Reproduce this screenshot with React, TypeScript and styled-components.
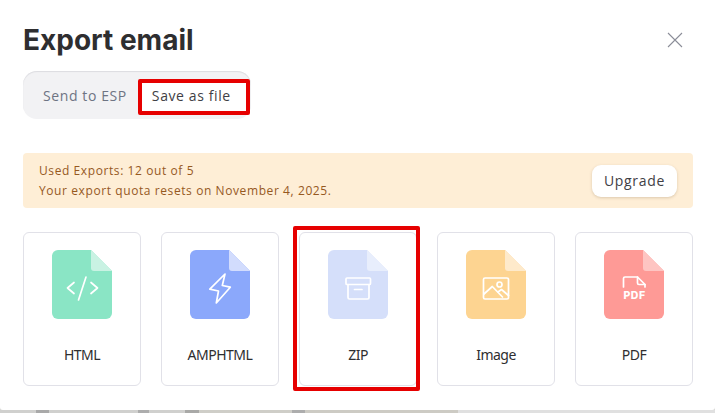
import styled, { createGlobalStyle } from "styled-components";

const GlobalStyle = createGlobalStyle`
  html, body {
    margin: 0;
    padding: 0;
    background: #fff;
  }
  * {
    box-sizing: border-box;
  }
`;

const formats = [
  { name: "HTML", body: "#8ae5c5", fold: "#c9f2e3" },
  { name: "AMPHTML", body: "#8ba8fb", fold: "#d2dcfd" },
  { name: "ZIP", body: "#d5dffa", fold: "#e8eefc" },
  { name: "Image", body: "#fdd491", fold: "#feeacb" },
  { name: "PDF", body: "#fe9a96", fold: "#fec5c2" },
];

// what shows of the page behind the dialog, left to right
const backdrop = [
  { w: 36, c: "#d0d0ce" },
  { w: 13, c: "#a9a9a9" },
  { w: 89, c: "#d0d0ce" },
  { w: 11, c: "#adadad" },
  { w: 36, c: "#d0d0ce" },
  { w: 14, c: "#a9a9a7" },
  { w: 93, c: "#cfcec8" },
  { w: 13, c: "#adadad" },
  { w: 153, c: "#cdcbc4" },
  { w: 257, c: "#e0e0e0" },
];

const Glyph = ({ name }: { name: string }) => {
  if (name === "HTML") {
    return (
      <GlyphLines>
        <path d="M22 32.5 15.5 38 22 43.5" />
        <path d="M39 32.5 45.5 38 39 43.5" />
        <path d="M34 27 26.5 50" />
      </GlyphLines>
    );
  }
  if (name === "AMPHTML") {
    return (
      <GlyphLines>
        <path d="M35 24 19.8 39.2 28.5 41 26.3 53 40.3 37.2 32.3 35.5Z" />
      </GlyphLines>
    );
  }
  if (name === "ZIP") {
    return (
      <GlyphLines>
        <rect x="18" y="28" width="24.5" height="6.5" rx="1" />
        <path d="M20 34.5V47.500a1.500 1.500 0 0 0 1.500 1.500H39.500a1.500 1.500 0 0 0 1.500-1.500V34.500" />
        <path d="M26.500 39.500H34" />
      </GlyphLines>
    );
  }
  if (name === "Image") {
    return (
      <GlyphLines>
        <rect x="17.500" y="28" width="25" height="21" rx="1.500" />
        <circle cx="33.500" cy="34.500" r="2.500" />
        <path d="M18 44 26.300 36.500 36.500 47" />
        <path d="M32 42 35.500 39.500 42.500 45.500" />
      </GlyphLines>
    );
  }
  return (
    <>
      <GlyphLines>
        <path d="M19.500 37V28.500a1.500 1.500 0 0 1 1.500-1.500H33.500L41 34.500V37" />
        <path d="M33.500 27V33a1.500 1.500 0 0 0 1.500 1.500H41" />
      </GlyphLines>
      <PdfMark x="30.500" y="49">
        PDF
      </PdfMark>
    </>
  );
};

const FileIcon = ({ name, body, fold }: { name: string; body: string; fold: string }) => (
  <svg width="60" height="69" viewBox="0 0 60 69">
    <path
      d="M6 0H39L60 21V63a6 6 0 0 1-6 6H6a6 6 0 0 1-6-6V6a6 6 0 0 1 6-6Z"
      fill={body}
    />
    <path d="M39 0 60 21H42a3 3 0 0 1-3-3Z" fill={fold} />
    <Glyph name={name} />
  </svg>
);

const App = () => {
  return (
    <Page>
      <GlobalStyle />
      <Modal>
        <Header>
          <Title>Export email</Title>
          <CloseButton aria-label="Close">
            <svg width="16" height="16" viewBox="0 0 16 16">
              <path d="M1 1 15 15M15 1 1 15" stroke="#8b8d98" strokeWidth="1.100" fill="none" />
            </svg>
          </CloseButton>
        </Header>
        <Tabs>
          <Tab>Send to ESP</Tab>
          <Tab $active $marked>
            Save as file
          </Tab>
        </Tabs>
        <Notice>
          <NoticeText>
            <div>Used Exports: 12 out of 5</div>
            <div>Your export quota resets on November 4, 2025.</div>
          </NoticeText>
          <UpgradeButton>Upgrade</UpgradeButton>
        </Notice>
        <Cards>
          {formats.map((f) => (
            <Card key={f.name} $marked={f.name === "ZIP"}>
              <FileIcon name={f.name} body={f.body} fold={f.fold} />
              <CardLabel>{f.name}</CardLabel>
            </Card>
          ))}
        </Cards>
      </Modal>
      <BackdropStrip>
        {backdrop.map((b, i) => (
          <BackdropBit key={i} $w={b.w} $c={b.c} />
        ))}
      </BackdropStrip>
    </Page>
  );
};

export default App;

const Page = styled.div`
  width: 715px;
  height: 413px;
  overflow: hidden;
  background: #d8d8d6;
  display: flex;
  flex-direction: column;
`;

const Modal = styled.div`
  position: relative;
  height: 410px;
  flex: none;
  padding: 20px 22px 0 23px;
  border-radius: 0 0 3px 3px;
  background: #fff;
`;

const Header = styled.div`
  display: flex;
  align-items: center;
  justify-content: space-between;
  height: 40px;
`;

const Title = styled.h1`
  margin: 0;
  font-family: "Inter", "Noto Sans", sans-serif;
  font-size: 28px;
  font-weight: 700;
  color: #2e2e30;
`;

const CloseButton = styled.button`
  display: flex;
  padding: 0;
  margin-right: 10px;
  border: 0;
  background: none;
`;

const Tabs = styled.div`
  display: flex;
  align-items: center;
  width: 228px;
  height: 48px;
  margin-top: 11px;
  padding: 4px 1px 0 8px;
  border-radius: 14px;
  background: #f2f2f4;
  box-shadow: inset 0 1px 1px #dcdce0;
`;

const Tab = styled.div<{ $active?: boolean; $marked?: boolean }>`
  position: relative;
  display: flex;
  align-items: center;
  height: 36px;
  padding: 0 11px 4px ${(p) => (p.$active ? "14px" : "12px")};
  flex: ${(p) => (p.$active ? "1" : "none")};
  border-radius: 4px;
  font-family: "Open Sans", sans-serif;
  font-size: 14px;
  letter-spacing: 0.600px;
  color: ${(p) => (p.$active ? "#3f4045" : "#6e7483")};
  background: ${(p) => (p.$active ? "#fff" : "transparent")};
  ${(p) =>
    p.$marked &&
    `
    &::after {
      content: "";
      position: absolute;
      inset: 0;
      border: 4px solid #e60000;
      border-radius: 2px;
    }
  `}
`;

const Notice = styled.div`
  display: flex;
  align-items: center;
  justify-content: space-between;
  width: 670px;
  height: 55px;
  margin-top: 34px;
  padding: 0 16px;
  border-radius: 4px;
  background: #feeed6;
`;

const NoticeText = styled.div`
  font-family: "Open Sans", sans-serif;
  font-size: 12px;
  line-height: 20px;
  letter-spacing: 0.590px;
  color: #96591f;
`;

const UpgradeButton = styled.button`
  width: 85px;
  height: 32px;
  border: 0;
  border-radius: 9px;
  background: #fff;
  box-shadow: 0 1px 3px rgba(120, 90, 50, 0.250);
  font-family: "Open Sans", sans-serif;
  font-size: 14px;
  letter-spacing: 0.700px;
  color: #3f4045;
`;

const Cards = styled.div`
  display: grid;
  grid-template-columns: repeat(5, 118px);
  column-gap: 20px;
  margin-top: 24px;
`;

const Card = styled.div<{ $marked?: boolean }>`
  position: relative;
  display: flex;
  flex-direction: column;
  align-items: center;
  height: 154px;
  padding-top: 17px;
  border: 1px solid #e1e1e8;
  border-radius: 6px;
  background: #fff;
  ${(p) =>
    p.$marked &&
    `
    &::after {
      content: "";
      position: absolute;
      inset: -7px -4px -6px -7px;
      border: 4px solid #e60000;
      border-radius: 2px;
    }
  `}
`;

const CardLabel = styled.div`
  margin-top: 26px;
  font-family: "Noto Sans", sans-serif;
  font-size: 14px;
  line-height: 20px;
  letter-spacing: -0.500px;
  color: #2e2e30;
`;

const GlyphLines = styled.g`
  fill: none;
  stroke: #fff;
  stroke-width: 1.700;
  stroke-linecap: round;
  stroke-linejoin: round;
`;

const PdfMark = styled.text`
  fill: #fff;
  font-family: "Inter", sans-serif;
  font-size: 10.500px;
  font-weight: 800;
  letter-spacing: 0.500px;
  text-anchor: middle;
`;

const BackdropStrip = styled.div`
  flex: 1;
  display: flex;
`;

const BackdropBit = styled.div<{ $w: number; $c: string }>`
  flex: none;
  width: ${(p) => p.$w}px;
  background: ${(p) => p.$c};
`;
